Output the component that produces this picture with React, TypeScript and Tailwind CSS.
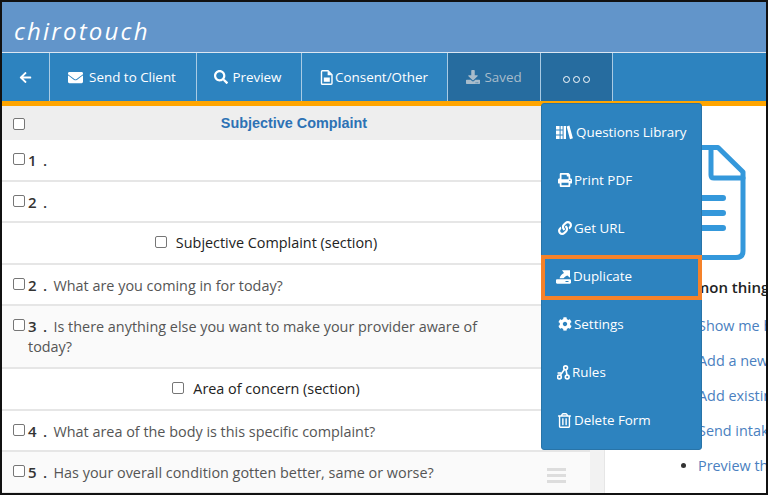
import React from "react";
import { FaArrowLeft, FaEnvelope, FaSearch, FaDownload, FaPrint, FaLink, FaCog, FaRegTrashAlt } from "react-icons/fa";

const FileIcon = () => (
  <svg width="13" height="15" viewBox="0 0 13 15" fill="none">
    <path d="M1.5 1.7C1.5 1.2 1.9.8 2.4.8H8L12 4.8V13.2C12 13.8 11.6 14.2 11 14.2H2.4C1.9 14.2 1.5 13.8 1.5 13.2Z" fill="none" stroke="white" strokeWidth="1.4" />
    <path d="M7.6 1V5.2H12" fill="white" />
    <path d="M3.8 7.5H9.8V11.8H3.8Z" fill="white" />
  </svg>
);

const BooksIcon = () => (
  <svg width="17" height="15" viewBox="0 0 17 15" fill="white">
    <path d="M0 1H3.6V4.4H0ZM0 5.4H3.6V9.4H0ZM0 10.4H3.6V14H0ZM4.6 1H6.6V4.4H4.6ZM4.6 5.4H6.6V9.4H4.6ZM4.6 10.4H6.6V14H4.6ZM7.6 1H10V14H7.6Z" />
    <path d="M10.6 1.4L13.4.5L16.9 13.2L14 14.2Z" />
  </svg>
);

const DuplicateIcon = () => (
  <svg width="15" height="15" viewBox="0 0 15 15" fill="white">
    <path fillRule="evenodd" d="M0 11.6C0 10.8.5 10.3 1.2 10.3H13.8C14.5 10.3 15 10.8 15 11.6V13.6C15 14.3 14.5 14.8 13.8 14.8H1.2C.5 14.8 0 14.3 0 13.6ZM9.5 12V13H12.5V12Z" />
    <path d="M3.6 9.2C4 7.2 5.6 5.2 8 4L6 1.2H14V8.8L11.4 6.4C9.6 7.2 8.4 8 7.6 9.2Z" />
  </svg>
);

const RulesIcon = () => (
  <svg width="13" height="15" viewBox="0 0 13 15" fill="none" stroke="white" strokeWidth="1.6">
    <circle cx="8.6" cy="2.8" r="1.9" />
    <circle cx="2.4" cy="12" r="1.9" />
    <circle cx="10.2" cy="12" r="1.9" />
    <path d="M7.4 4.6L3.4 10M9 4.8L10 10" />
    <path d="M.6 8H4" />
  </svg>
);

const Check = ({ className = "" }: { className?: string }) => (
  <span className={`inline-block w-[12px] h-[12px] rounded-[2px] border border-[#767676] bg-white shrink-0 ${className}`} />
);

const NavItem = ({ children, className = "text-white" }: { children: React.ReactNode; className?: string }) => (
  <div className={`h-full flex items-center justify-center border-r border-[#a9cbe4] text-[13.4px] ${className}`}>
    {children}
  </div>
);

const QRow = ({ n, children, className = "" }: { n: string; children?: React.ReactNode; className?: string }) => (
  <div className={`border-b-2 border-[#e6e6e6] pl-[11px] pr-[100px] pt-[10px] flex text-[14.4px] leading-[20px] text-[#555] ${className}`}>
    <div className="relative pl-[15px]">
      <Check className="absolute left-0 top-[3px]" />
      <span className="font-semibold text-[15px] text-[#333] tracking-[1.3px] mr-[5px]">{n} .</span>
      {children}
    </div>
  </div>
);

const SectionRow = ({ children }: { children: React.ReactNode }) => (
  <div className="h-[42px] border-b-2 border-[#e6e6e6] pr-[60px] flex items-center justify-center gap-[9px] text-[14.4px] font-medium text-[#222]">
    <Check className="-mt-[3px]" />
    <span>{children}</span>
  </div>
);

const MenuItem = ({ icon, label, gap = "gap-[1px]", iconW = "w-[17px]" }: { icon: React.ReactNode; label: string; gap?: string; iconW?: string }) => (
  <div className={`h-[48px] pl-[14px] flex items-center text-[13.4px] text-white ${gap}`}>
    <span className={`flex justify-center ${iconW}`}>{icon}</span>
    <span>{label}</span>
  </div>
);

const links = ["Show me how", "Add a new form", "Add existing", "Send intake", "Preview the form"];

export default function App() {
  return (
    <div className="relative w-[768px] h-[495px] border-2 border-[#111] overflow-hidden bg-white font-['Open_Sans',sans-serif]">
      <header className="h-[50px] bg-[#6295ca] border-b border-[#dbe6f2] box-content flex items-end">
        <span className="ml-[12px] mb-[6px] text-[24px] leading-[30px] italic tracking-[2.2px] text-white">
          chirotouch
        </span>
      </header>
      <nav className="h-[48px] bg-[#2d83bf] flex">
        <NavItem className="w-[48px] text-white"><FaArrowLeft className="text-[13px]" /></NavItem>
        <NavItem className="w-[147px] gap-[6px] pr-[2px] text-white"><FaEnvelope className="text-[15px]" />Send to Client</NavItem>
        <NavItem className="w-[105px] gap-[4px] pr-[2px] text-white"><FaSearch className="text-[14px]" />Preview</NavItem>
        <NavItem className="w-[146px] gap-[2px] pr-[1px] text-white"><FileIcon />Consent/Other</NavItem>
        <NavItem className="w-[93px] gap-[4px] bg-[#266c9f] text-[#a8bccb]"><FaDownload className="text-[14px]" />Saved</NavItem>
        <NavItem className="w-[72px] bg-[#266c9f] gap-[3px] pt-[4px] text-white">
          <span className="w-[7px] h-[7px] rounded-full border border-white" />
          <span className="w-[7px] h-[7px] rounded-full border border-white" />
          <span className="w-[7px] h-[7px] rounded-full border border-white" />
        </NavItem>
      </nav>
      <div className="h-[5px] bg-[#ffa500]" />
      <main className="flex">
        <section className="w-[588px] shrink-0">
          <div className="h-[34px] bg-[#eeeeee] flex items-center pl-[11px] pr-[11px]">
            <Check className="mt-[2px]" />
            <div className="flex-1 text-center pr-[16px] pt-[2px] text-[14.4px] font-bold font-['Liberation_Sans',sans-serif] text-[#2d72b5]">
              Subjective Complaint
            </div>
          </div>
          <QRow n="1" className="h-[42px]" />
          <QRow n="2" className="h-[41px]" />
          <SectionRow>Subjective Complaint (section)</SectionRow>
          <QRow n="2" className="h-[41px]">What are you coming in for today?</QRow>
          <QRow n="3" className="h-[63px] bg-[#fafafa]">
            Is there anything else you want to make your provider aware of today?
          </QRow>
          <SectionRow>Area of concern (section)</SectionRow>
          <QRow n="4" className="h-[41px]">What area of the body is this specific complaint?</QRow>
          <div className="relative">
            <QRow n="5" className="h-[42px] bg-[#fafafa] border-b-0">Has your overall condition gotten better, same or worse?</QRow>
            <div className="absolute right-[24px] top-[16px] w-[19px] flex flex-col gap-[3px]">
              <span className="h-[3px] bg-[#dddddd]" />
              <span className="h-[3px] bg-[#dddddd]" />
              <span className="h-[3px] bg-[#dddddd]" />
            </div>
          </div>
        </section>
        <div className="w-[15px] shrink-0 bg-[#f2f2f2] border-r border-[#e6e6e6]" />
        <section className="flex-1 min-w-0 overflow-hidden">
          <div className="h-[39px]" />
          <div className="flex justify-end pr-[19px]">
            <svg width="48" height="116" viewBox="0 0 48 116" fill="none" stroke="#3498db" strokeWidth="5" strokeLinejoin="round" strokeLinecap="round">
              <path d="M-10 2.5H19L44 27V106Q44 112.5 37 112.5H-10" />
              <path d="M12 2.5V30Q12 33 15 33H44" />
              <path d="M-10 53H24M-10 68H24M-10 83H24" strokeWidth="6" />
            </svg>
          </div>
          <div className="ml-[57px] mt-[16px] text-[15px] leading-[20px] font-semibold text-[#222] whitespace-nowrap">Common things</div>
          <ul className="mt-[19px] list-disc pl-[93px] text-[14.4px] leading-[20px] text-[#4a7fc0] whitespace-nowrap">
            {links.map((l) => (
              <li key={l} className="mb-[15px] marker:text-[#333]">{l}</li>
            ))}
          </ul>
        </section>
      </main>
      <div className="absolute left-[539px] top-[101px] w-[161px] h-[347px] pt-[4px] bg-[#2d83bf] rounded-[3px] border border-[#2874a8]">
        <MenuItem icon={<BooksIcon />} label="Questions Library" gap="gap-[3px]" />
        <MenuItem icon={<FaPrint className="text-[14px]" />} label="Print PDF" />
        <MenuItem icon={<FaLink className="text-[14px]" />} label="Get URL" />
        <div className="relative -mx-[1px]">
          <div className="absolute inset-x-0 top-[3px] h-[45px] border-[4px] border-[#f5822a]" />
          <MenuItem icon={<DuplicateIcon />} label="Duplicate" />
        </div>
        <MenuItem icon={<FaCog className="text-[14px]" />} label="Settings" />
        <MenuItem icon={<RulesIcon />} label="Rules" iconW="w-[15px]" />
        <MenuItem icon={<FaRegTrashAlt className="text-[15px]" />} label="Delete Form" />
      </div>
    </div>
  );
}
